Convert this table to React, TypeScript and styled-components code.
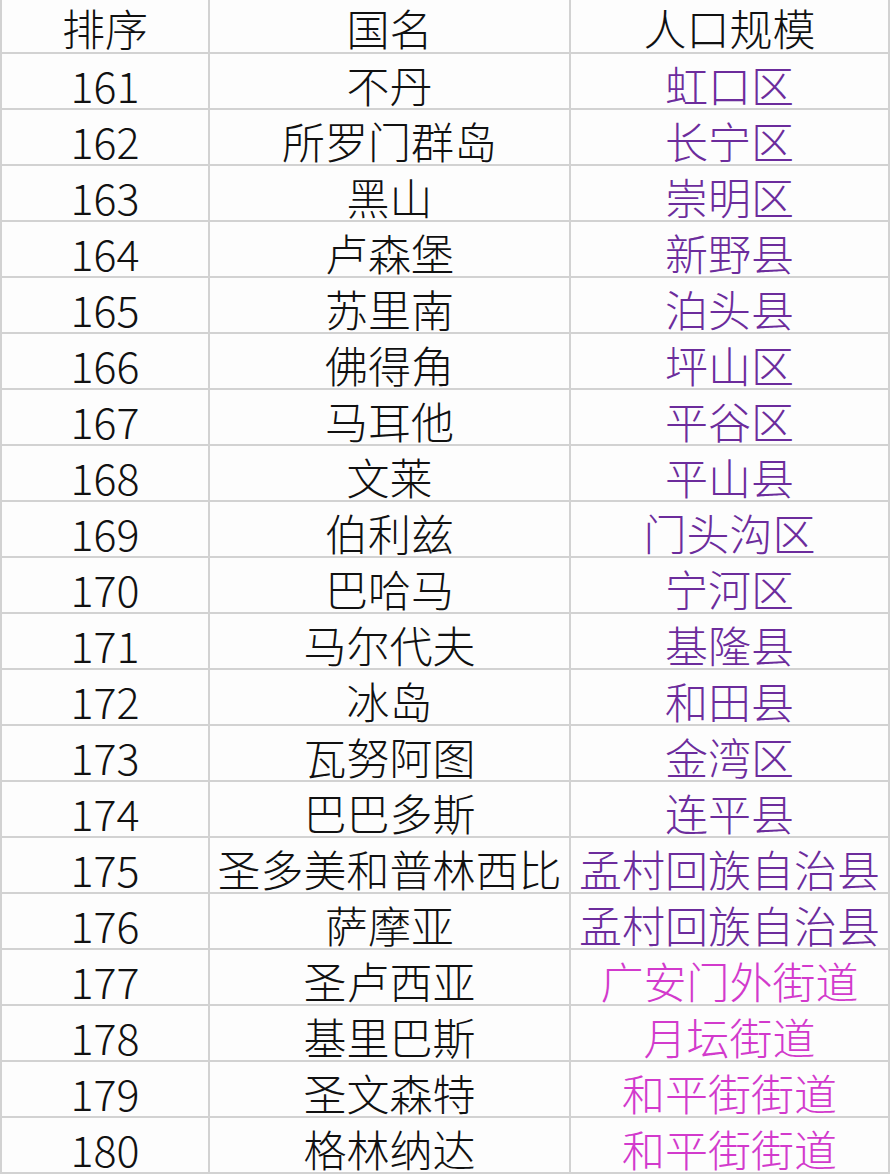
import React from 'react'
import { createGlobalStyle, styled } from 'styled-components'

const GlobalStyle = createGlobalStyle`
  html, body {
    margin: 0;
    padding: 0;
    background: #ffffff;
  }
  body {
    font-family: 'Noto Sans CJK SC', 'Noto Sans', sans-serif;
  }
`;

type Row = { rank: number; country: string; scale: string; tone: 'purple' | 'pink' };

const rows: Row[] = [
  { rank: 161, country: '不丹', scale: '虹口区', tone: 'purple' },
  { rank: 162, country: '所罗门群岛', scale: '长宁区', tone: 'purple' },
  { rank: 163, country: '黑山', scale: '崇明区', tone: 'purple' },
  { rank: 164, country: '卢森堡', scale: '新野县', tone: 'purple' },
  { rank: 165, country: '苏里南', scale: '泊头县', tone: 'purple' },
  { rank: 166, country: '佛得角', scale: '坪山区', tone: 'purple' },
  { rank: 167, country: '马耳他', scale: '平谷区', tone: 'purple' },
  { rank: 168, country: '文莱', scale: '平山县', tone: 'purple' },
  { rank: 169, country: '伯利兹', scale: '门头沟区', tone: 'purple' },
  { rank: 170, country: '巴哈马', scale: '宁河区', tone: 'purple' },
  { rank: 171, country: '马尔代夫', scale: '基隆县', tone: 'purple' },
  { rank: 172, country: '冰岛', scale: '和田县', tone: 'purple' },
  { rank: 173, country: '瓦努阿图', scale: '金湾区', tone: 'purple' },
  { rank: 174, country: '巴巴多斯', scale: '连平县', tone: 'purple' },
  { rank: 175, country: '圣多美和普林西比', scale: '孟村回族自治县', tone: 'purple' },
  { rank: 176, country: '萨摩亚', scale: '孟村回族自治县', tone: 'purple' },
  { rank: 177, country: '圣卢西亚', scale: '广安门外街道', tone: 'pink' },
  { rank: 178, country: '基里巴斯', scale: '月坛街道', tone: 'pink' },
  { rank: 179, country: '圣文森特', scale: '和平街街道', tone: 'pink' },
  { rank: 180, country: '格林纳达', scale: '和平街街道', tone: 'pink' },
];

export default function App() {
  return (
    <Sheet>
      <GlobalStyle />
      <Cell $head>排序</Cell>
      <Cell $head>国名</Cell>
      <Cell $head>人口规模</Cell>
      {rows.map((r) => (
        <React.Fragment key={r.rank}>
          <Cell>{r.rank}</Cell>
          <Cell>{r.country}</Cell>
          <Cell $tone={r.tone}>{r.scale}</Cell>
        </React.Fragment>
      ))}
    </Sheet>
  );
}

/* Styled Components */
const Sheet = styled.div`
  display: grid;
  grid-template-columns: 208px 361px 319px;
  grid-template-rows: 54px repeat(20, 56px);
  width: 890px;
  height: 1174px;
  box-sizing: border-box;
  border-left: 2px solid #d2d2d2;
  overflow: hidden;
  background: #fdfdfd;
`;

const toneColor = { purple: '#6c2c9c', pink: '#d23acc' };

const Cell = styled.div<{ $head?: boolean; $tone?: 'purple' | 'pink' }>`
  display: flex;
  align-items: center;
  justify-content: center;
  box-sizing: border-box;
  border-right: 2px solid #d2d2d2;
  border-bottom: 2px solid #d2d2d2;
  font-size: 43px;
  font-weight: 300;
  line-height: 50px;
  padding-top: ${(p) => (p.$head ? '2px' : '6px')};
  white-space: nowrap;
  color: ${(p) => (p.$tone ? toneColor[p.$tone] : '#111111')};
`;
